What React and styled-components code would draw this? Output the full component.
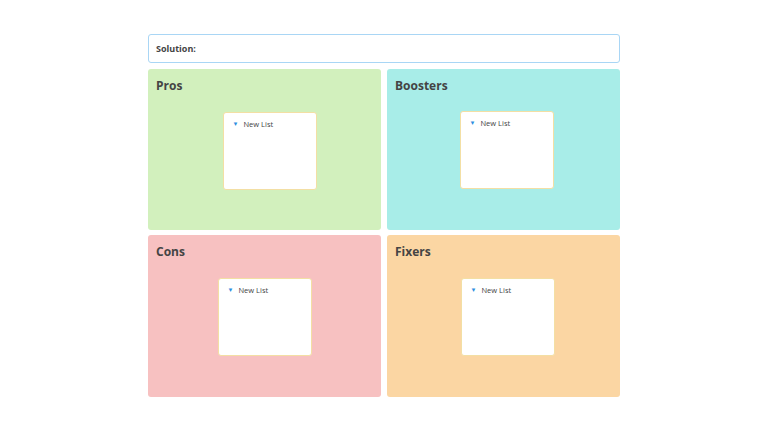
import React from "react";
import styled, { createGlobalStyle } from "styled-components";

const Global = createGlobalStyle`
  html, body { margin: 0; background: #fff; font-family: "Open Sans", "Liberation Sans", sans-serif; }
`;
const Page = styled.div`
  width: 768px; height: 432px; box-sizing: border-box;
  padding: 34px 0 0 148px;
`;
const Board = styled.div`
  width: 472px; display: flex; flex-direction: column; gap: 6px;
`;
const Solution = styled.div`
  height: 29px; box-sizing: border-box; border: 1.5px solid #a9d6f5; border-radius: 3px;
  display: flex; align-items: center; padding-left: 7px;
  font-size: 9px; font-weight: 700; color: #444;
`;
const Grid = styled.div`
  display: grid; grid-template-columns: 233px 233px; grid-template-rows: 161px 162px; gap: 5px 6px;
`;
const Panel = styled.div`
  background: ${p => p.bg}; border-radius: 3px; padding: 8px 8px; box-sizing: border-box;
  display: flex; flex-direction: column;
`;
const Title = styled.div`
  font-size: 12px; font-weight: 700; color: #444; height: 18px;
`;
const CardRow = styled.div`
  display: flex; justify-content: center; padding-left: ${p => p.off}px; margin-top: ${p => p.top}px;
`;
const Card = styled.div`
  width: 94px; height: 78px; box-sizing: border-box; background: #fff;
  border: 1px solid #f3dfa4; border-radius: 3px; padding: 6px 9px;
  font-size: 7.5px; color: #444; display: flex; align-items: flex-start; gap: 5px;
`;
const Arrow = styled.span`
  color: #2d8ee0; font-size: 6px; line-height: 10px;
`;

const panels = [
  { t: "Pros", bg: "#d2f0bd", off: 10, top: 17 },
  { t: "Boosters", bg: "#a8ede8", off: 6, top: 16 },
  { t: "Cons", bg: "#f7c1c1", off: -3, top: 17 },
  { t: "Fixers", bg: "#fbd6a3", off: 8, top: 17 },
];

export default function App() {
  return (
    <Page>
      <Global />
      <Board>
        <Solution>Solution:</Solution>
        <Grid>
          {panels.map(p => (
            <Panel key={p.t} bg={p.bg}>
              <Title>{p.t}</Title>
              <CardRow off={p.off} top={p.top}>
                <Card><Arrow>▼</Arrow><span style={{lineHeight: "10px"}}>New List</span></Card>
              </CardRow>
            </Panel>
          ))}
        </Grid>
      </Board>
    </Page>
  );
}
